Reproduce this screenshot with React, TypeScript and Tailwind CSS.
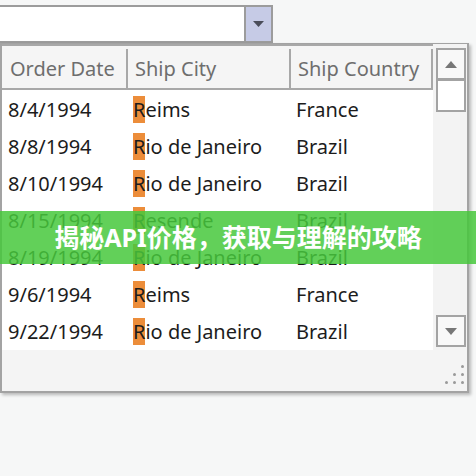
import React from 'react'

const rows = [
  { date: '8/4/1994', city: 'Reims', country: 'France' },
  { date: '8/8/1994', city: 'Rio de Janeiro', country: 'Brazil' },
  { date: '8/10/1994', city: 'Rio de Janeiro', country: 'Brazil' },
  { date: '8/15/1994', city: 'Resende', country: 'Brazil' },
  { date: '8/19/1994', city: 'Rio de Janeiro', country: 'Brazil' },
  { date: '9/6/1994', city: 'Reims', country: 'France' },
  { date: '9/22/1994', city: 'Rio de Janeiro', country: 'Brazil' },
]

function Triangle({ up, color }: { up?: boolean; color: string }) {
  return (
    <svg width="12" height="7" viewBox="0 0 12 7">
      <path d={up ? 'M0 7 L6 0 L12 7 Z' : 'M0 0 L12 0 L6 7 Z'} fill={color} />
    </svg>
  )
}

function City({ name }: { name: string }) {
  return (
    <span>
      <span className="bg-[#ec8d3a]">{name[0]}</span>
      {name.slice(1)}
    </span>
  )
}

export default function App() {
  return (
    <div className="relative h-[476px] w-[476px] overflow-hidden bg-[#f6f7f7] font-['Noto_Sans',sans-serif]">
      {/* combobox */}
      <div className="mt-[5px] flex h-[38px] w-[273px] border-y-2 border-r-2 border-[#9c9c9c] bg-white">
        <div className="flex-1" />
        <div className="flex w-[27px] items-center justify-center border-l-2 border-[#9c9c9c] bg-[#c6cbe6]">
          <svg width="11" height="6" viewBox="0 0 11 6">
            <path d="M0 0 L11 0 L5.5 6 Z" fill="#4a4d5a" />
          </svg>
        </div>
      </div>

      {/* dropdown panel */}
      <div className="flex h-[350px] w-[469px] flex-col border-2 border-t border-[#a3a3a3] bg-[#f4f4f4] shadow-[2px_2px_3px_rgba(0,0,0,0.25)]">
        <div className="flex h-[306px]">
          <div className="flex w-[431px] flex-col bg-white">
            <div className="flex h-[46px] border-y-2 border-[#a8a8a8] bg-[#f5f5f5] pt-[3px] text-[20px] text-[#6e6e6e]">
              <div className="flex w-[126px] items-center border-r-2 border-[#a8a8a8] pl-[8px]">Order Date</div>
              <div className="flex w-[163px] items-center border-r-2 border-[#a8a8a8] pl-[7px]">Ship City</div>
              <div className="flex w-[142px] items-center border-r-2 border-[#a8a8a8] pl-[7px]">Ship Country</div>
            </div>
            {rows.map((r, i) => (
              <div key={i} className="flex h-[37px] items-center pt-[3px] text-[20px] text-[#1c1c1c]">
                <div className="w-[126px] pl-[6px]">{r.date}</div>
                <div className="w-[163px] pl-[5px]">
                  <City name={r.city} />
                </div>
                <div className="w-[142px] pl-[5px]">{r.country}</div>
              </div>
            ))}
          </div>
          {/* scrollbar */}
          <div className="flex flex-1 flex-col bg-[#f3f3f3] pb-[3px] pl-[3px] pr-[1px] pt-[4px]">
            <div className="flex h-[32px] items-center justify-center border-2 border-[#a3a3a3] bg-[#f8f8f8]">
              <Triangle up color="#777" />
            </div>
            <div className="-mt-[2px] h-[34px] border-2 border-t-[3px] border-[#a3a3a3] bg-white" />
            <div className="flex-1" />
            <div className="flex h-[32px] items-center justify-center border-2 border-[#a3a3a3] bg-[#f8f8f8]">
              <Triangle color="#777" />
            </div>
          </div>
        </div>
        {/* footer with resize grip */}
        <div className="flex flex-1 items-end justify-end pb-[7px] pr-[3px]">
          <div className="grid grid-cols-3 gap-[5px]">
            <span />
            <span />
            <span className="h-[3px] w-[3px] rounded-full bg-[#9a9a9a]" />
            <span />
            <span className="h-[3px] w-[3px] rounded-full bg-[#9a9a9a]" />
            <span className="h-[3px] w-[3px] rounded-full bg-[#9a9a9a]" />
            <span className="h-[3px] w-[3px] rounded-full bg-[#9a9a9a]" />
            <span className="h-[3px] w-[3px] rounded-full bg-[#9a9a9a]" />
            <span className="h-[3px] w-[3px] rounded-full bg-[#9a9a9a]" />
          </div>
        </div>
      </div>

      {/* title banner over the list */}
      <div className="absolute left-0 right-0 top-[211px] flex h-[53px] items-center justify-center bg-[rgba(70,200,60,0.85)]">
        <span className="font-['Noto_Sans','Noto_Sans_CJK_SC',sans-serif] text-[25px] font-bold text-white">
          揭秘API价格，获取与理解的攻略
        </span>
      </div>
    </div>
  )
}
